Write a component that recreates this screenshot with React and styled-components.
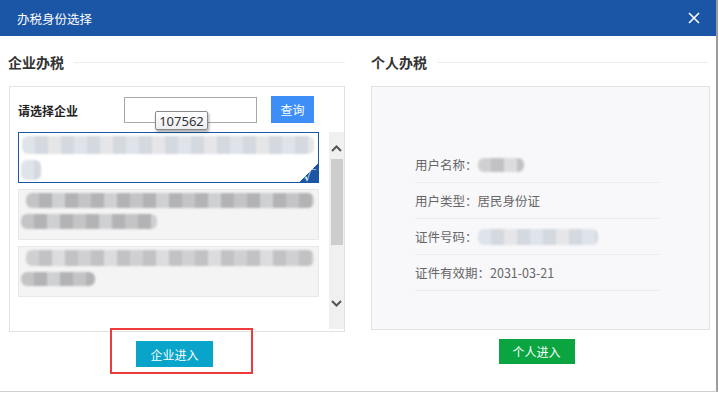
import React from "react"
import styled, { createGlobalStyle } from "styled-components"

const GlobalStyle = createGlobalStyle`
  html, body {
    margin: 0;
    padding: 0;
    background: #fff;
  }
  body {
    font-family: "Microsoft YaHei", "Noto Sans CJK SC", "Noto Sans", sans-serif;
  }
`

const Dialog = styled.div`
  width: 716px;
  height: 391px;
  background: #fff;
  border-right: 2px solid #9c9c9c;
  border-bottom: 1px solid #cfcfcf;
  display: flex;
  flex-direction: column;
`

const Header = styled.div`
  height: 36px;
  background: #1b56a6;
  color: #fff;
  display: flex;
  align-items: center;
  justify-content: space-between;
  padding: 0 16px 0 17px;
  font-size: 12.5px;
`

const CloseBtn = styled.span`
  display: flex;
  width: 12px;
  height: 12px;
`

const Body = styled.div`
  display: flex;
  gap: 26px;
  padding: 0 6px 0 8px;
`

const Column = styled.div`
  width: ${p => p.$w}px;
  display: flex;
  flex-direction: column;
  align-items: stretch;
`

const SectionTitle = styled.div`
  display: flex;
  align-items: center;
  height: 16px;
  margin-top: 18px;
  font-size: 14px;
  font-weight: bold;
  color: #333;
  &::after {
    content: "";
    flex: 1;
    height: 1px;
    background: #eeeeee;
    margin-left: 10px;
    margin-right: ${p => p.$lineRight || 0}px;
  }
`

const Panel = styled.div`
  position: relative;
  margin-top: 16px;
  margin-left: ${p => p.$ml || 0}px;
  height: ${p => p.$h}px;
  border: 1px solid #e2e2e2;
  background: ${p => p.$bg || "#fff"};
  box-sizing: border-box;
`

const SearchRow = styled.div`
  display: flex;
  align-items: center;
  padding: 9px 0 0 8px;
  height: 27px;
`

const SearchLabel = styled.span`
  width: 106px;
  font-size: 12px;
  font-weight: bold;
  color: #222;
  margin-top: 2px;
`

const SearchInput = styled.div`
  width: 133px;
  height: 26px;
  box-sizing: border-box;
  border: 1px solid #a8a8a8;
  background: #fff;
`

const QueryButton = styled.div`
  width: 43px;
  height: 27px;
  margin-left: 14px;
  background: #3d8ef7;
  color: #fff;
  font-size: 12px;
  display: flex;
  align-items: center;
  justify-content: center;
`

const Tooltip = styled.div`
  position: absolute;
  left: 145px;
  top: 24px;
  width: 53px;
  height: 19px;
  box-sizing: border-box;
  border: 1px solid #8a8a8a;
  border-radius: 2px;
  background: linear-gradient(#ffffff, #eeeef2);
  box-shadow: 1px 2px 3px rgba(0, 0, 0, 0.35);
  font-size: 13px;
  color: #333;
  display: flex;
  align-items: center;
  justify-content: center;
  font-family: "Noto Sans", "Liberation Sans", sans-serif;
  z-index: 2;
`

const ListArea = styled.div`
  display: flex;
  gap: 10px;
  margin-top: 9px;
  padding-left: 8px;
`

const List = styled.div`
  width: 302px;
  display: flex;
  flex-direction: column;
  gap: 6px;
`

const Item = styled.div`
  position: relative;
  height: 51px;
  box-sizing: border-box;
  border: 1px solid ${p => (p.$active ? "#1b56a6" : "#e8e8e8")};
  background: ${p => (p.$active ? "#fff" : "#f4f4f4")};
  padding: 3px 0 0 2px;
  display: flex;
  flex-direction: column;
  gap: 6px;
  overflow: hidden;
`

const CheckMark = styled.span`
  position: absolute;
  right: 0;
  bottom: 0;
  width: 18px;
  height: 18px;
  background: linear-gradient(135deg, transparent 50%, #1b56a6 50%);
  color: #fff;
  font-size: 12px;
  line-height: 12px;
  display: flex;
  align-items: flex-end;
  justify-content: flex-end;
  padding: 0 2px 1px 0;
  box-sizing: border-box;
  font-weight: bold;
`

const BlurLine = styled.div`
  width: ${p => p.$w}px;
  height: ${p => p.$h || 16}px;
  margin-left: ${p => p.$ml || 0}px;
  border-radius: 6px;
  filter: blur(1.2px);
  background: repeating-linear-gradient(
    90deg,
    ${p => p.$a} 0 13px,
    ${p => p.$b} 13px 26px,
    ${p => p.$c} 26px 39px,
    ${p => p.$b} 39px 52px
  );
`

const Scrollbar = styled.div`
  width: 15px;
  height: 197px;
  background: #f0f0f0;
  display: flex;
  flex-direction: column;
  align-items: center;
  padding-top: 13px;
  box-sizing: border-box;
`

const Thumb = styled.div`
  width: 12px;
  height: 86px;
  margin-top: 7px;
  background: #cdcdcd;
`

const DownArrow = styled.div`
  margin-top: 55px;
  display: flex;
`

const ButtonRow = styled.div`
  position: relative;
  display: flex;
  justify-content: center;
  margin-top: ${p => p.$mt}px;
  padding-right: ${p => p.$pr || 0}px;
`

const ActionButton = styled.div`
  width: ${p => p.$w}px;
  height: ${p => p.$h}px;
  background: ${p => p.$bg};
  color: #fff;
  font-size: 12px;
  display: flex;
  align-items: center;
  justify-content: center;
`

const Highlight = styled.div`
  position: absolute;
  left: 102px;
  top: -13px;
  width: 143px;
  height: 46px;
  box-sizing: border-box;
  border: 2px solid #ee3c3c;
`

const InfoList = styled.div`
  display: flex;
  flex-direction: column;
  padding: 60px 0 0 43px;
  width: 245px;
`

const InfoRow = styled.div`
  height: 36px;
  box-sizing: border-box;
  border-bottom: 1px solid #ececef;
  display: flex;
  align-items: center;
  font-size: 12.5px;
  color: #666;
`

const Chevron = ({ up }) => (
  <svg width="11" height="7" viewBox="0 0 11 7">
    <path
      d={up ? "M1 6 L5.5 1.5 L10 6" : "M1 1 L5.5 5.5 L10 1"}
      fill="none"
      stroke="#555"
      strokeWidth="2"
    />
  </svg>
)

const tones = {
  blue: ["#dfe3ea", "#d4d8df", "#e6e6e8"],
  gray: ["#c4c4c6", "#b3b3b5", "#cfd0d2"],
  light: ["#d0d0d2", "#c2c2c4", "#dcdcde"],
}

const Blur = ({ tone, ...rest }) => {
  const [a, b, c] = tones[tone]
  return <BlurLine $a={a} $b={b} $c={c} {...rest} />
}

const App = () => (
  <>
    <GlobalStyle />
    <Dialog>
      <Header>
        <span>办税身份选择</span>
        <CloseBtn>
          <svg width="12" height="12" viewBox="0 0 12 12">
            <path d="M1 1 L11 11 M11 1 L1 11" stroke="#fff" strokeWidth="1.6" />
          </svg>
        </CloseBtn>
      </Header>
      <Body>
        <Column $w={337}>
          <SectionTitle>企业办税</SectionTitle>
          <Panel $h={246} $ml={1}>
            <SearchRow>
              <SearchLabel>请选择企业</SearchLabel>
              <SearchInput />
              <QueryButton>查询</QueryButton>
            </SearchRow>
            <Tooltip>107562</Tooltip>
            <ListArea>
              <List>
                <Item $active>
                  <Blur tone="blue" $w={292} $h={18} $ml={1} />
                  <Blur tone="blue" $w={20} $h={20} />
                  <CheckMark>√</CheckMark>
                </Item>
                <Item>
                  <Blur tone="gray" $w={288} $h={15} $ml={5} />
                  <Blur tone="gray" $w={136} $h={15} />
                </Item>
                <Item>
                  <Blur tone="light" $w={288} $h={16} $ml={5} />
                  <Blur tone="gray" $w={74} $h={14} />
                </Item>
              </List>
              <Scrollbar>
                <Chevron up />
                <Thumb />
                <DownArrow>
                  <Chevron />
                </DownArrow>
              </Scrollbar>
            </ListArea>
          </Panel>
          <ButtonRow $mt={9} $pr={4}>
            <ActionButton $w={77} $h={26} $bg="#08a4c9">企业进入</ActionButton>
            <Highlight />
          </ButtonRow>
        </Column>
        <Column $w={339}>
          <SectionTitle $lineRight={2}>个人办税</SectionTitle>
          <Panel $h={244} $bg="#f8f8fa">
            <InfoList>
              <InfoRow>
                用户名称：
                <Blur tone="light" $w={46} $h={14} />
              </InfoRow>
              <InfoRow>用户类型：居民身份证</InfoRow>
              <InfoRow>
                证件号码：
                <Blur tone="blue" $w={120} $h={16} />
              </InfoRow>
              <InfoRow>证件有效期：2031-03-21</InfoRow>
            </InfoList>
          </Panel>
          <ButtonRow $mt={9} $pr={8}>
            <ActionButton $w={76} $h={25} $bg="#0aa540">个人进入</ActionButton>
          </ButtonRow>
        </Column>
      </Body>
    </Dialog>
  </>
)

export default App
